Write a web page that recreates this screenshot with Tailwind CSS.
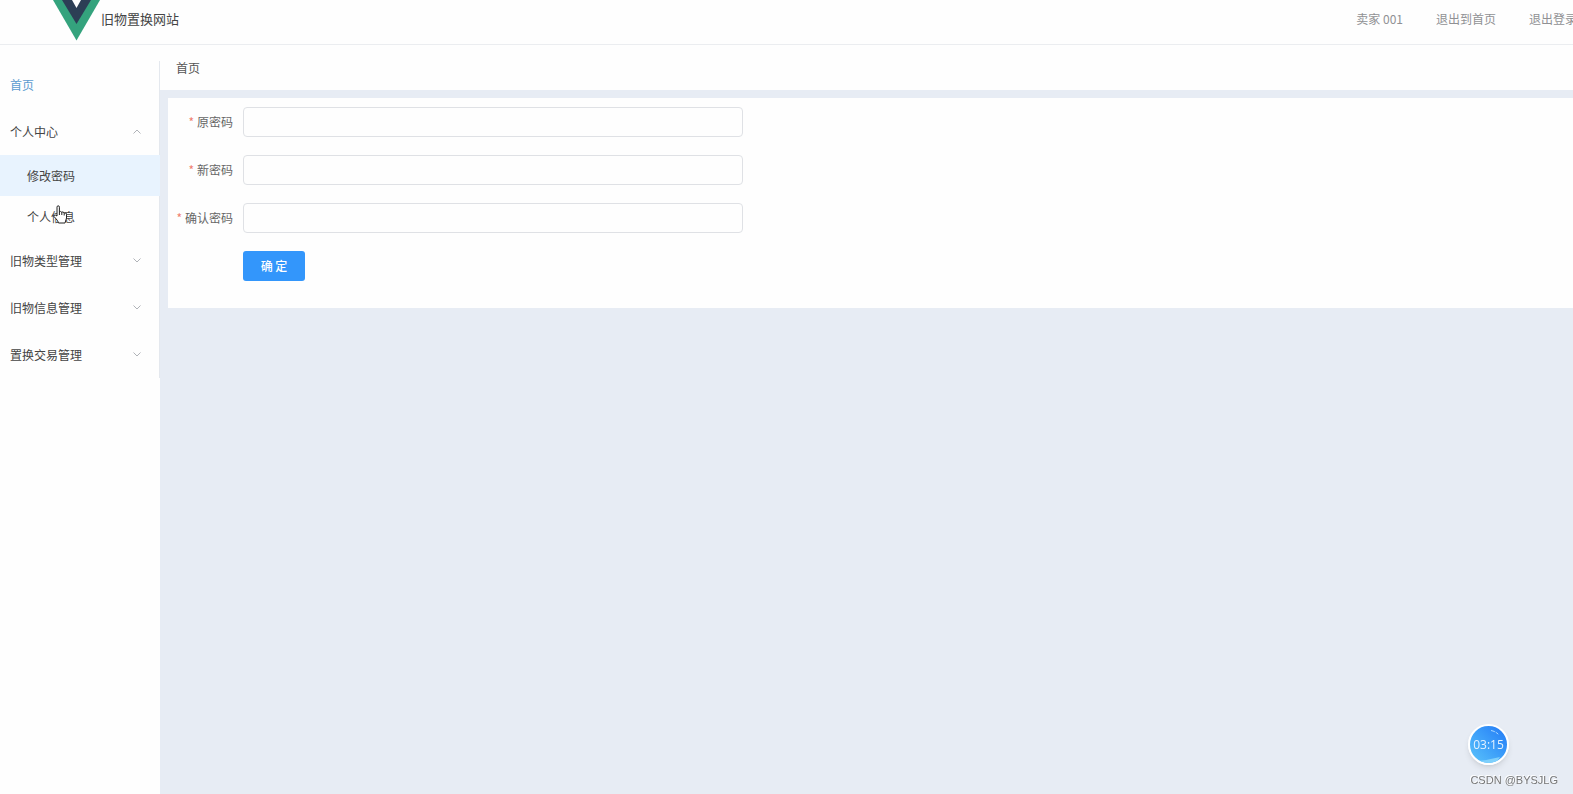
<!DOCTYPE html>
<html lang="zh-CN">
<head>
  <meta charset="utf-8" />
  <meta name="viewport" content="width=device-width, initial-scale=1" />
  <title>旧物置换网站</title>
  <script src="https://cdn.jsdelivr.net/npm/@tailwindcss/browser@4"></script>
</head>
<body class="flex h-screen flex-col overflow-hidden bg-[#fefefe] font-['Noto_Sans_CJK_SC',sans-serif] text-[12px] text-[#555]">
  <header class="flex h-[45px] shrink-0 items-start justify-between border-b border-[#ebedf0] pl-[53px]">
    <a href="#" class="flex items-start text-[#444]">
      <svg width="48" height="41" viewBox="0 0 48 41">
        <path fill="#34a37d" d="M0 0H47L23.500 40.500Z" />
        <path fill="#2c3e55" d="M9 0H38L23.500 24Z" />
        <path fill="#fefefe" d="M19 0H28L23.500 8Z" />
      </svg>
      <span class="text-[13px] leading-[38px]">旧物置换网站</span>
    </a>
    <nav class="-mr-1 flex gap-[33px] leading-[38px] whitespace-nowrap text-[#909194]">
      <a href="#">卖家 001</a>
      <a href="#">退出到首页</a>
      <a href="#">退出登录</a>
    </nav>
  </header>

  <div class="flex min-h-0 flex-1">
    <aside class="w-[160px] shrink-0 pt-4">
      <ul class="border-r border-[#e4e8ee] text-[#444]">
        <li><a href="#" class="flex h-[47px] items-center px-[10px] text-[#5b9bd0]">首页</a></li>
        <li>
          <button class="flex h-[47px] w-full items-center justify-between pr-[17px] pl-[10px]">
            个人中心
            <svg width="10" height="10" viewBox="0 0 10 10" fill="none" stroke="#b0b3b8"><path d="M1.500 6.500 5 3l3.500 3.500" /></svg>
          </button>
          <ul>
            <li><a href="#" class="-mr-px flex h-[41px] items-center bg-[#e8f3fe] pl-[27px]">修改密码</a></li>
            <li><a href="#" class="relative flex h-[41px] items-center pl-[27px]">
              个人信息
              <!-- hand pointer -->
              <svg class="absolute top-[9px] left-[53px]" width="16" height="19" viewBox="0 0 16 19" fill="#fff" stroke="#222" stroke-linejoin="round">
                <path d="M4 11V2.200Q4 .8 5.200 .8T6.400 2.200V7Q7.500 5.800 8.700 7.200 10 6.300 11.100 7.800 13.500 7.200 13.500 9.500V13L12 18H5.500L4.500 15.500 1 11.500Q.5 9.800 2.200 10Z" />
                <path fill="none" d="M6.400 7v3M8.800 7.200V10M11.200 7.800V10.500" />
              </svg>
            </a></li>
          </ul>
        </li>
        <li>
          <button class="flex h-[47px] w-full items-center justify-between pr-[17px] pl-[10px]">
            旧物类型管理
            <svg width="10" height="10" viewBox="0 0 10 10" fill="none" stroke="#b0b3b8"><path d="M1.500 2.500 5 6l3.500-3.500" /></svg>
          </button>
        </li>
        <li>
          <button class="flex h-[47px] w-full items-center justify-between pr-[17px] pl-[10px]">
            旧物信息管理
            <svg width="10" height="10" viewBox="0 0 10 10" fill="none" stroke="#b0b3b8"><path d="M1.500 2.500 5 6l3.500-3.500" /></svg>
          </button>
        </li>
        <li>
          <button class="flex h-[47px] w-full items-center justify-between pr-[17px] pl-[10px]">
            置换交易管理
            <svg width="10" height="10" viewBox="0 0 10 10" fill="none" stroke="#b0b3b8"><path d="M1.500 2.500 5 6l3.500-3.500" /></svg>
          </button>
        </li>
      </ul>
    </aside>

    <main class="min-w-0 flex-1 bg-[#e7ecf4]">
      <div class="h-[45px] bg-[#fefefe] pl-4 leading-[45px]">首页</div>
      <form class="mt-2 ml-2 flex flex-col gap-[18px] bg-[#fefefe] pt-[9px] pb-[27px] text-[#666]">
        <div class="flex h-[30px] items-center">
          <label for="old" class="w-[75px] pr-[10px] text-right"><span class="mr-[3px] text-[#f08070]">*</span>原密码</label>
          <input id="old" type="password" class="h-full w-[500px] rounded-[4px] border border-[#dfe1e5] px-3 outline-none focus:border-[#3396fb]" />
        </div>
        <div class="flex h-[30px] items-center">
          <label for="new" class="w-[75px] pr-[10px] text-right"><span class="mr-[3px] text-[#f08070]">*</span>新密码</label>
          <input id="new" type="password" class="h-full w-[500px] rounded-[4px] border border-[#dfe1e5] px-3 outline-none focus:border-[#3396fb]" />
        </div>
        <div class="flex h-[30px] items-center">
          <label for="confirm" class="w-[75px] pr-[10px] text-right"><span class="mr-[3px] text-[#f08070]">*</span>确认密码</label>
          <input id="confirm" type="password" class="h-full w-[500px] rounded-[4px] border border-[#dfe1e5] px-3 outline-none focus:border-[#3396fb]" />
        </div>
        <button type="button" class="ml-[75px] h-[30px] w-[62px] rounded-[3px] bg-[#3396fb] font-medium text-white">确 定</button>
      </form>
    </main>
  </div>

  <!-- recording timer -->
  <div class="fixed right-16 bottom-[29px] flex size-[41px] items-center justify-center overflow-hidden rounded-full border-2 border-white bg-linear-to-tr from-[#5cc4fa] to-[#2478f6] shadow-md">
    <svg class="absolute inset-0" width="37" height="37" viewBox="0 0 37 37" fill="none">
      <path fill="#7fd0fb" d="M8 35Q18 34 30 31L26 37H12Z" />
      <path stroke="#a8d6ff" stroke-dasharray="4 1 3 1" d="M21 4.500Q26 5.500 29 9" />
    </svg>
    <span class="relative font-['Open_Sans',sans-serif] text-[12px] text-[#e4f2ff]">03:15</span>
  </div>
  <p class="fixed right-[15px] bottom-[6px] font-['Liberation_Sans',sans-serif] text-[11px] leading-4 text-[#777] [text-shadow:-1px_-1px_0_#fff]">CSDN @BYSJLG</p>
</body>
</html>
